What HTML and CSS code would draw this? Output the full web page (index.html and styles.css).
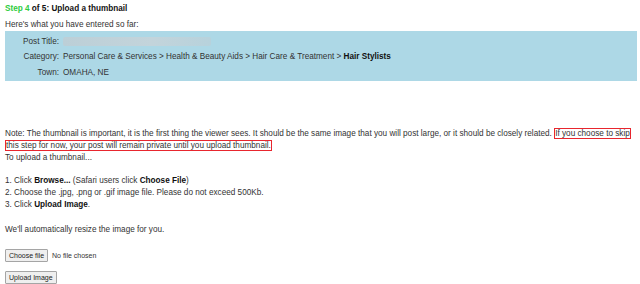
FILE: index.html
```html
<!DOCTYPE html>
<html>
<head>
<meta charset="utf-8">
<link rel="stylesheet" href="styles.css">
</head>
<body>
<div class="page">
  <h1 class="step"><span class="green">Step 4</span> of 5: Upload a thumbnail</h1>
  <p class="intro">Here's what you have entered so far:</p>
  <table class="summary">
    <tr><td class="label">Post Title:</td><td><span class="blur"></span></td></tr>
    <tr><td class="label">Category:</td><td>Personal Care &amp; Services &gt; Health &amp; Beauty Aids &gt; Hair Care &amp; Treatment &gt; <b>Hair Stylists</b></td></tr>
    <tr><td class="label">Town:</td><td>OMAHA, NE</td></tr>
  </table>
  <div class="spacer"></div>
  <p class="note">Note: The thumbnail is important, it is the first thing the viewer sees. It should be the same image that you will post large, or it should be closely related. <span class="mark">If you choose to skip this step for now, your post will remain private until you upload thumbnail.</span><br>To upload a thumbnail...</p>
  <ol class="steps">
    <li>1. Click <b>Browse...</b> (Safari users click <b>Choose File</b>)</li>
    <li>2. Choose the .jpg, .png or .gif image file. Please do not exceed 500Kb.</li>
    <li>3. Click <b>Upload Image</b>.</li>
  </ol>
  <p class="resize">We'll automatically resize the image for you.</p>
  <div class="file"><button class="btn">Choose file</button><span class="nofile">No file chosen</span></div>
  <div class="upload"><button class="btn">Upload Image</button></div>
</div>
</body>
</html>
```
FILE: styles.css
```css
html, body { margin: 0; padding: 0; background: #fff; }
body { font-family: "Liberation Sans", Arial, sans-serif; font-size: 8.2px; color: #333; }
.page { padding: 3px 5px 0 5px; }
.step { font-size: 8.2px; font-weight: bold; color: #111; margin: 0; line-height: 12px; }
.green { color: #2ecc40; }
.intro { margin: 4px 0 0 0; line-height: 12px; }
.summary { width: 632px; background: #add8e6; border-collapse: collapse; margin-top: 0; }
.summary td { padding: 0; height: 16px; line-height: 12px; vertical-align: middle; }
.summary tr:first-child td { height: 17px; vertical-align: bottom; padding-bottom: 1px; }
.summary .label { width: 54px; text-align: right; padding-right: 4px; }
.summary b { color: #111; }
.blur { display: inline-block; width: 148px; height: 9px; background: linear-gradient(90deg, #bccfd7, #c3d4db 60%, #b7d2dc); vertical-align: middle; border-radius: 2px; }
.spacer { height: 47px; }
.note { margin: 0; line-height: 12px; }
.mark { border: 1px solid #e8262e; -webkit-box-decoration-break: clone; box-decoration-break: clone; }
.steps { list-style: none; margin: 11px 0 0 0; padding: 0; line-height: 12px; }
.steps b { color: #111; }
.resize { margin: 13px 0 0 0; line-height: 12px; }
.file { margin-top: 13px; display: flex; align-items: center; gap: 4px; }
.upload { margin-top: 9px; }
.btn { font-family: "Liberation Sans", Arial, sans-serif; font-size: 7px; color: #222; background: #efefef; border: 1px solid #a5a5a5; border-radius: 1px; padding: 1px 3px; line-height: 9px; }
.nofile { font-size: 7px; color: #333; }
```
